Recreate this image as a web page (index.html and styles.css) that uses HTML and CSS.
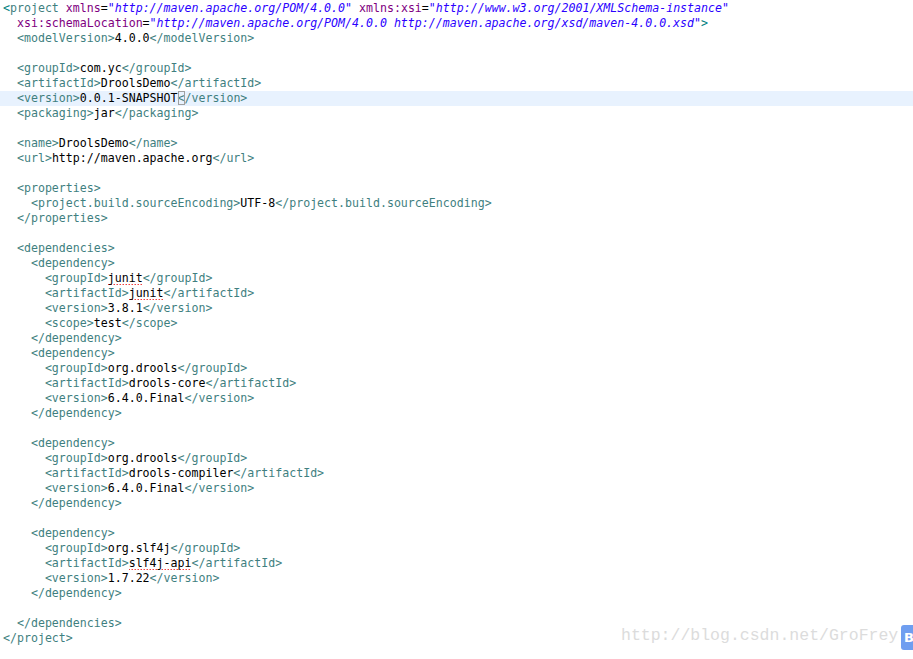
FILE: index.html
```html
<!DOCTYPE html>
<html>
<head>
    <link rel="stylesheet" href="styles.css">
</head>
<body>
    <div class="editor">
        <div class="line"><span class="b">&lt;</span><span class="t">project</span> <span class="a">xmlns</span>=<span class="v">"http://maven.apache.org/POM/4.0.0"</span> <span class="a">xmlns:xsi</span>=<span class="v">"http://www.w3.org/2001/XMLSchema-instance"</span></div>
        <div class="line">  <span class="a">xsi:schemaLocation</span>=<span class="v">"http://maven.apache.org/POM/4.0.0 http://maven.apache.org/xsd/maven-4.0.0.xsd"</span><span class="b">&gt;</span></div>
        <div class="line">  <span class="t">&lt;modelVersion&gt;</span>4.0.0<span class="t">&lt;/modelVersion&gt;</span></div>
        <div class="line"></div>
        <div class="line">  <span class="t">&lt;groupId&gt;</span>com.yc<span class="t">&lt;/groupId&gt;</span></div>
        <div class="line">  <span class="t">&lt;artifactId&gt;</span>DroolsDemo<span class="t">&lt;/artifactId&gt;</span></div>
        <div class="line current">  <span class="t">&lt;version&gt;</span>0.0.1-SNAPSHOT<span class="t"><span class="caret">&lt;</span>/version&gt;</span></div>
        <div class="line">  <span class="t">&lt;packaging&gt;</span>jar<span class="t">&lt;/packaging&gt;</span></div>
        <div class="line"></div>
        <div class="line">  <span class="t">&lt;name&gt;</span>DroolsDemo<span class="t">&lt;/name&gt;</span></div>
        <div class="line">  <span class="t">&lt;url&gt;</span>http://maven.apache.org<span class="t">&lt;/url&gt;</span></div>
        <div class="line"></div>
        <div class="line">  <span class="t">&lt;properties&gt;</span></div>
        <div class="line">    <span class="t">&lt;project.build.sourceEncoding&gt;</span>UTF-8<span class="t">&lt;/project.build.sourceEncoding&gt;</span></div>
        <div class="line">  <span class="t">&lt;/properties&gt;</span></div>
        <div class="line"></div>
        <div class="line">  <span class="t">&lt;dependencies&gt;</span></div>
        <div class="line">    <span class="t">&lt;dependency&gt;</span></div>
        <div class="line">      <span class="t">&lt;groupId&gt;</span><span class="spell">junit</span><span class="t">&lt;/groupId&gt;</span></div>
        <div class="line">      <span class="t">&lt;artifactId&gt;</span><span class="spell">junit</span><span class="t">&lt;/artifactId&gt;</span></div>
        <div class="line">      <span class="t">&lt;version&gt;</span>3.8.1<span class="t">&lt;/version&gt;</span></div>
        <div class="line">      <span class="t">&lt;scope&gt;</span>test<span class="t">&lt;/scope&gt;</span></div>
        <div class="line">    <span class="t">&lt;/dependency&gt;</span></div>
        <div class="line">    <span class="t">&lt;dependency&gt;</span></div>
        <div class="line">      <span class="t">&lt;groupId&gt;</span>org.drools<span class="t">&lt;/groupId&gt;</span></div>
        <div class="line">      <span class="t">&lt;artifactId&gt;</span>drools-core<span class="t">&lt;/artifactId&gt;</span></div>
        <div class="line">      <span class="t">&lt;version&gt;</span>6.4.0.Final<span class="t">&lt;/version&gt;</span></div>
        <div class="line">    <span class="t">&lt;/dependency&gt;</span></div>
        <div class="line"></div>
        <div class="line">    <span class="t">&lt;dependency&gt;</span></div>
        <div class="line">      <span class="t">&lt;groupId&gt;</span>org.drools<span class="t">&lt;/groupId&gt;</span></div>
        <div class="line">      <span class="t">&lt;artifactId&gt;</span>drools-compiler<span class="t">&lt;/artifactId&gt;</span></div>
        <div class="line">      <span class="t">&lt;version&gt;</span>6.4.0.Final<span class="t">&lt;/version&gt;</span></div>
        <div class="line">    <span class="t">&lt;/dependency&gt;</span></div>
        <div class="line"></div>
        <div class="line">    <span class="t">&lt;dependency&gt;</span></div>
        <div class="line">      <span class="t">&lt;groupId&gt;</span>org.slf4j<span class="t">&lt;/groupId&gt;</span></div>
        <div class="line">      <span class="t">&lt;artifactId&gt;</span><span class="spell">slf4j-api</span><span class="t">&lt;/artifactId&gt;</span></div>
        <div class="line">      <span class="t">&lt;version&gt;</span>1.7.22<span class="t">&lt;/version&gt;</span></div>
        <div class="line">    <span class="t">&lt;/dependency&gt;</span></div>
        <div class="line"></div>
        <div class="line">  <span class="t">&lt;/dependencies&gt;</span></div>
        <div class="line"><span class="t">&lt;/project&gt;</span></div>
    </div>

    <div class="watermark">http://blog.csdn.net/GroFrey</div>
    <div class="badge">B</div>
</body>
</html>
```

FILE: styles.css
```css
body {
    margin: 0;
    background: #ffffff;
    overflow: hidden;
}
.editor {
    padding-top: 1px;
    font-family: "DejaVu Sans Mono", "Liberation Mono", monospace;
    font-size: 11.6px;
    color: #000000;
}
.line {
    height: 15px;
    line-height: 15px;
    padding-left: 3px;
    white-space: pre;
}
.current {
    background: #e8f2fe;
}
.b {
    color: #008080;
}
.t {
    color: #3f7f7f;
}
.a {
    color: #7f007f;
}
.v {
    color: #2a00ff;
    font-style: italic;
}
.caret {
    outline: 1px solid #a0a0a0;
    outline-offset: -1px;
}
/* spell check squiggle, kept inside the line box */
.spell {
    background-image: linear-gradient(45deg, transparent 40%, #f04040 40%, #f04040 60%, transparent 60%),
                      linear-gradient(-45deg, transparent 40%, #f04040 40%, #f04040 60%, transparent 60%);
    background-size: 3px 2px;
    background-repeat: repeat-x;
    background-position: 0 13px, 1.5px 13px;
}
.watermark {
    position: absolute;
    left: 621px;
    top: 626px;
    font-family: "Liberation Mono", monospace;
    font-size: 16.5px;
    color: #dcdcdc;
}
.badge {
    position: absolute;
    left: 901px;
    top: 625px;
    width: 14px;
    height: 25px;
    background: #6f9ef0;
    border-radius: 3px 0 0 3px;
    color: #ffffff;
    font-family: "DejaVu Sans", sans-serif;
    font-size: 13px;
    font-weight: bold;
    line-height: 25px;
    padding-left: 3px;
    overflow: hidden;
    box-sizing: border-box;
}
```
